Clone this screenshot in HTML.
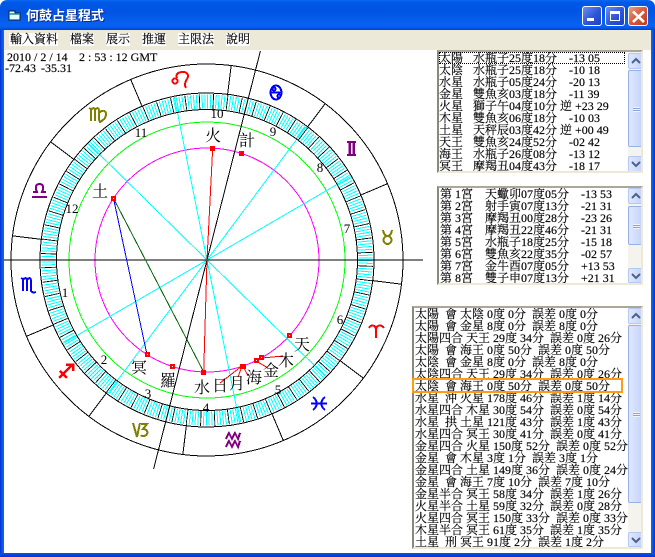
<!DOCTYPE html>
<html><head><meta charset="utf-8"><style>
html,body{margin:0;padding:0;background:#fff}
#w{position:relative;width:655px;height:557px;overflow:hidden;background:#fff;font:12px/12px "Liberation Serif","Noto Serif CJK SC",serif;color:#000;-webkit-text-stroke:.15px #000}
.abs,.tb,.b,.l,.s,.sb,.up,.dn,.th,.g{position:absolute}
#tb{position:absolute;left:0;top:0;width:655px;height:30px;border-radius:7px 7px 0 0;background:linear-gradient(180deg,#0a6af0 0,#0058e6 8%,#0054e3 40%,#0a62f2 85%,#0458ea 93%,#0040c8 100%)}
#ttl{position:absolute;left:26px;top:9px;font:bold 13px/14px "Liberation Sans","Noto Sans CJK TC",sans-serif;color:#fff;-webkit-text-stroke:0;text-shadow:1px 1px 0 #0a2a90;white-space:pre}
#lb{position:absolute;left:0;top:30px;width:4px;height:527px;background:linear-gradient(90deg,#0831d9,#0855dd 50%,#166aee)}
#rb{position:absolute;left:651px;top:30px;width:4px;height:527px;background:linear-gradient(270deg,#0831d9,#0855dd 50%,#166aee)}
#bb{position:absolute;left:0;top:553px;width:655px;height:4px;background:linear-gradient(180deg,#0855dd,#0831d9)}
#mn{position:absolute;left:4px;top:30px;width:647px;height:20px;background:#ece9d8}
.m{position:absolute;top:33px;height:13px;line-height:13px;background:#fff;white-space:pre}
.b{top:6px;width:20px;height:20px;border:1px solid #fff;border-radius:3px;box-sizing:border-box;background:linear-gradient(135deg,#6f8ff0,#2d55d8 55%,#1c3fc4)}
.l{background:#fff;border:2px solid;border-color:#aca899 #ece9d8 #ece9d8 #8a887c;box-sizing:border-box;overflow:hidden}
.r{position:absolute;left:0;height:12px;line-height:12px;white-space:pre}
.r span{position:absolute;top:0;white-space:pre}
.sb{top:0;width:15px;background:#f5f3ee}
.up,.dn,.th{left:0;width:15px;box-sizing:border-box;border:1px solid #b4c8f6;border-radius:2px;background:linear-gradient(90deg,#dfe8fe,#c5d4fc)}
.th{border-color:#98b1e4}
.up svg,.dn svg{position:absolute;left:2px;top:3px}
.g{left:4px;width:7px;height:5px;background:repeating-linear-gradient(180deg,#eef3fe 0,#eef3fe 1px,#8ca4de 1px,#8ca4de 2px)}
svg text{-webkit-text-stroke:0}
</style></head><body><div id="w">

<svg class="abs" style="left:0;top:0" width="655" height="557" viewBox="0 0 655 557" shape-rendering="crispEdges" fill="none">
<circle cx="207" cy="260" r="196" stroke="#000"/>
<circle cx="207" cy="260" r="138" stroke="#00ff00"/>
<circle cx="207" cy="260" r="112" stroke="#ff00ff"/>
<g stroke="#00ffff">
<line x1="207" y1="260" x2="63.4" y2="343.4"/><line x1="207" y1="260" x2="350.6" y2="176.6"/>
<line x1="207" y1="260" x2="108" y2="393.2"/><line x1="207" y1="260" x2="306" y2="126.8"/>
<line x1="207" y1="260" x2="239.6" y2="422.8"/><line x1="207" y1="260" x2="174.4" y2="97.2"/>
<line x1="207" y1="260" x2="325.4" y2="376.3"/><line x1="207" y1="260" x2="88.6" y2="143.7"/>
</g>
<circle cx="207" cy="260" r="158.5" stroke="#00ffff" stroke-width="14" stroke-dasharray="1 1.766"/>
<circle cx="207" cy="260" r="158.5" stroke="#000" stroke-width="15" stroke-dasharray="0.8 13.03" stroke-dashoffset="-5.75"/>
<circle cx="207" cy="260" r="167" stroke="#000"/>
<circle cx="207" cy="260" r="150.5" stroke="#000"/>
<g stroke="#000">
<line x1="42.3" y1="239.5" x2="12.5" y2="235.8"/><line x1="54.1" y1="324.6" x2="26.5" y2="336.3"/>
<line x1="106.9" y1="392.4" x2="88.8" y2="416.4"/><line x1="186.5" y1="424.7" x2="182.8" y2="454.5"/>
<line x1="271.6" y1="412.9" x2="283.3" y2="440.5"/><line x1="339.4" y1="360.1" x2="363.4" y2="378.2"/>
<line x1="371.7" y1="280.5" x2="401.5" y2="284.2"/><line x1="359.9" y1="195.4" x2="387.5" y2="183.7"/>
<line x1="307.1" y1="127.6" x2="325.2" y2="103.6"/><line x1="227.5" y1="95.3" x2="231.2" y2="65.5"/>
<line x1="142.4" y1="107.1" x2="130.7" y2="79.5"/><line x1="74.6" y1="159.9" x2="50.6" y2="141.8"/>
<line x1="4" y1="260" x2="423" y2="260"/>
<line x1="153.6" y1="469" x2="260.4" y2="51"/>
</g>
<line x1="113.5" y1="198.4" x2="147" y2="354.6" stroke="#0000ff"/>
<line x1="113.5" y1="198.4" x2="203.7" y2="372" stroke="#006400"/>
<g stroke="#ff0000">
<line x1="207" y1="260" x2="212.7" y2="148"/><line x1="207" y1="260" x2="203.7" y2="372"/>
<line x1="242" y1="366" x2="220" y2="383"/><line x1="242" y1="366" x2="238" y2="377"/>
<line x1="243" y1="366" x2="248" y2="376"/><line x1="256" y1="361" x2="268" y2="368"/>
<line x1="262" y1="358" x2="283" y2="356"/>
</g>
<g fill="#ff0000">
<rect x="111" y="196" width="5" height="5"/><rect x="210" y="146" width="5" height="5"/>
<rect x="239" y="151" width="5" height="5"/><rect x="170" y="364" width="5" height="5"/>
<rect x="201" y="370" width="5" height="5"/><rect x="145" y="352" width="5" height="5"/>
<rect x="287" y="333" width="5" height="5"/><rect x="259" y="355" width="5" height="5"/>
<rect x="254" y="358" width="5" height="5"/><rect x="240" y="364" width="6" height="5"/>
</g>
<g fill="#fff">
<rect x="113" y="198" width="1" height="1"/><rect x="172" y="366" width="1" height="1"/>
<rect x="147" y="354" width="1" height="1"/><rect x="289" y="335" width="1" height="1"/>
<rect x="261" y="357" width="1" height="1"/><rect x="256" y="360" width="1" height="1"/>
</g>
<g stroke="#ff0000" stroke-width="2">
<circle cx="175" cy="81" r="2.5"/>
<path d="M177 78C175 73 180 72 183 72C188 72 189 76 187 79C185 82 184 85 186 88"/>
<path d="M369 328C371 324 375 325 376 329V338M376 329C377 325 381 324 384 328"/>
<path d="M59 378L72 365M66 364.5H73V371M60 371L67 378" stroke-width="2.5"/>
</g>
<g stroke="#0000ff" stroke-width="2">
<ellipse cx="276" cy="92.5" rx="5.5" ry="7"/><path d="M271 92.5H281"/>
<circle cx="274" cy="89" r="1.5"/><circle cx="279" cy="96" r="1.5"/>
<path d="M313 397C318 401 318 406 313 410M325 397C320 401 320 406 325 410M311 403.5H327"/>
<path d="M21 278L23 279V291M23 280C25 277 27 278 27 281V291M27 280C29 277 31 278 31 281V290C31 292 33 293 36 292"/>
</g>
<g stroke="#800080" stroke-width="2">
<path d="M347 142H356M347 155H356" />
<path d="M349.5 142V155M353.5 142V155" stroke-width="2.5"/>
<path d="M226 439L229 433L232 439L235 433L238 439L240 433M226 447L229 441L232 447L235 441L238 447L240 441"/>
<path d="M33 192H37C34 186 37 184 39.5 184C42 184 45 186 42 192H46M32 197H47"/>
</g>
<g stroke="#808000" stroke-width="2">
<circle cx="387.5" cy="240" r="4"/>
<path d="M383 230C384 235 386 236 387.5 236C389 236 391 235 392 230"/>
<path d="M133 423L137 437L140 423M141 424H147L143 429C147 429 148 432 147 434C146 436 142 437 141 435"/>
<path d="M89 108L91 109V121M91 110C93 107 95 108 95 111V121M95 110C97 107 99 108 99 111V119C99 121 100 122 101 122M99 113C103 109 106 111 106 114C106 118 103 121 99 122"/>
</g>
<g fill="#000" font-family="Liberation Serif,serif" font-size="13" text-anchor="middle">
<text x="141" y="137">11</text><text x="72" y="213">12</text><text x="217" y="118">10</text>
<text x="273" y="136">9</text><text x="320" y="172">8</text><text x="347" y="233">7</text>
<text x="65" y="297">1</text><text x="104" y="364">2</text><text x="148" y="398">3</text>
<text x="206" y="412">4</text><text x="278" y="394">5</text><text x="340" y="324">6</text>
</g>
<g fill="#000" font-family="Liberation Serif,Noto Serif CJK SC,serif" font-size="16" text-anchor="middle">
<text x="213" y="141">火</text><text x="247" y="146">計</text><text x="100" y="197">土</text>
<text x="139" y="373">冥</text><text x="168" y="386">羅</text><text x="202" y="393">水</text>
<text x="220" y="391">日</text><text x="237" y="389">月</text><text x="254" y="383">海</text>
<text x="271" y="376">金</text><text x="286" y="366">木</text><text x="302" y="350">天</text>
</g>
</svg>

<div id="lb"></div><div id="rb"></div><div id="bb"></div>
<div id="tb"></div>
<svg class="abs" style="left:8px;top:10px" width="14" height="12" viewBox="0 0 14 12"><path d="M1 1H7V3H12V10H1Z" fill="#dff" stroke="#102040"/><path d="M1 4H12" stroke="#2a8a9a" stroke-width="1.5"/></svg>
<div id="ttl">何鼓占星程式</div>
<div class="b" style="left:582px"><div class="abs" style="left:4px;top:11px;width:7px;height:3px;background:#fff"></div></div>
<div class="b" style="left:605px"><div class="abs" style="left:4px;top:4px;width:10px;height:10px;box-sizing:border-box;border:1px solid #fff;border-top-width:3px"></div></div>
<div class="b" style="left:628px;background:linear-gradient(135deg,#e8a08a,#d8583a 50%,#c23a1c)"><svg class="abs" style="left:3px;top:3px" width="13" height="13"><path d="M1 1.5L12 12M12 1.5L1 12" stroke="#fff" stroke-width="2.6" fill="none"/></svg></div>

<div id="mn"></div>
<div class="m" style="left:9px;width:49px;padding-left:1px;box-sizing:border-box">輸入資料</div>
<div class="m" style="left:70px">檔案</div>
<div class="m" style="left:106px">展示</div>
<div class="m" style="left:142px">推運</div>
<div class="m" style="left:178px">主限法</div>
<div class="m" style="left:226px">說明</div>

<div class="abs" style="left:7px;top:51px;white-space:pre">2010 / 2 / 14</div>
<div class="abs" style="left:79px;top:51px;white-space:pre">2 : 53 : 12 GMT</div>
<div class="abs" style="left:5px;top:62px;white-space:pre">-72.43</div>
<div class="abs" style="left:41px;top:62px;white-space:pre">-35.31</div>

<!-- List 1 -->
<div class="l" style="left:437px;top:50px;width:206px;height:123px">
<div class="r" style="top:0"><span style="left:0">太陽</span><span style="left:34px">水瓶子25度18分</span><span style="left:130px">-13 05</span></div>
<div class="r" style="top:12px"><span style="left:0">太陰</span><span style="left:34px">水瓶子25度18分</span><span style="left:130px">-10 18</span></div>
<div class="r" style="top:24px"><span style="left:0">水星</span><span style="left:34px">水瓶子05度24分</span><span style="left:130px">-20 13</span></div>
<div class="r" style="top:36px"><span style="left:0">金星</span><span style="left:34px">雙魚亥03度18分</span><span style="left:130px">-11 39</span></div>
<div class="r" style="top:48px"><span style="left:0">火星</span><span style="left:34px">獅子午04度10分</span><span style="left:121px">逆</span><span style="left:136px">+23 29</span></div>
<div class="r" style="top:60px"><span style="left:0">木星</span><span style="left:34px">雙魚亥06度18分</span><span style="left:130px">-10 03</span></div>
<div class="r" style="top:72px"><span style="left:0">土星</span><span style="left:34px">天秤辰03度42分</span><span style="left:121px">逆</span><span style="left:136px">+00 49</span></div>
<div class="r" style="top:84px"><span style="left:0">天王</span><span style="left:34px">雙魚亥24度52分</span><span style="left:130px">-02 42</span></div>
<div class="r" style="top:96px"><span style="left:0">海王</span><span style="left:34px">水瓶子26度08分</span><span style="left:130px">-13 12</span></div>
<div class="r" style="top:108px"><span style="left:0">冥王</span><span style="left:34px">摩羯丑04度43分</span><span style="left:130px">-18 17</span></div>
<div class="abs" style="left:0;top:0;width:186px;height:12px;box-sizing:border-box;border:1px dotted #000"></div>
<div class="sb" style="left:189px;height:119px">
<div class="up" style="top:1px;height:16px"><svg width="10" height="9"><path d="M1 6L5 2L9 6" stroke="#4d6185" stroke-width="2" fill="none"/></svg></div>
<div class="th" style="top:18px;height:77px"><div class="g" style="top:36px"></div></div>
<div class="dn" style="top:104px;height:16px"><svg width="10" height="9"><path d="M1 2L5 6L9 2" stroke="#4d6185" stroke-width="2" fill="none"/></svg></div>
</div></div>

<!-- List 2 -->
<div class="l" style="left:437px;top:186px;width:206px;height:99px">
<div class="r" style="top:0"><span style="left:1px">第 1宮</span><span style="left:46px">天蠍卯07度05分</span><span style="left:142px">-13 53</span></div>
<div class="r" style="top:12px"><span style="left:1px">第 2宮</span><span style="left:46px">射手寅07度13分</span><span style="left:142px">-21 31</span></div>
<div class="r" style="top:24px"><span style="left:1px">第 3宮</span><span style="left:46px">摩羯丑00度28分</span><span style="left:142px">-23 26</span></div>
<div class="r" style="top:36px"><span style="left:1px">第 4宮</span><span style="left:46px">摩羯丑22度46分</span><span style="left:142px">-21 31</span></div>
<div class="r" style="top:48px"><span style="left:1px">第 5宮</span><span style="left:46px">水瓶子18度25分</span><span style="left:142px">-15 18</span></div>
<div class="r" style="top:60px"><span style="left:1px">第 6宮</span><span style="left:46px">雙魚亥22度35分</span><span style="left:142px">-02 57</span></div>
<div class="r" style="top:72px"><span style="left:1px">第 7宮</span><span style="left:46px">金牛酉07度05分</span><span style="left:142px">+13 53</span></div>
<div class="r" style="top:84px"><span style="left:1px">第 8宮</span><span style="left:46px">雙子申07度13分</span><span style="left:142px">+21 31</span></div>
<div class="sb" style="left:189px;height:95px">
<div class="up" style="top:0;height:16px"><svg width="10" height="9"><path d="M1 6L5 2L9 6" stroke="#4d6185" stroke-width="2" fill="none"/></svg></div>
<div class="th" style="top:18px;height:39px"><div class="g" style="top:17px"></div></div>
<div class="dn" style="top:80px;height:15px"><svg width="10" height="9"><path d="M1 2L5 6L9 2" stroke="#4d6185" stroke-width="2" fill="none"/></svg></div>
</div></div>

<!-- List 3 -->
<div class="l" style="left:412px;top:306px;width:231px;height:243px">
<div class="r" style="left:1px;top:0">太陽  會 太陰 0度 0分  誤差 0度 0分</div>
<div class="r" style="left:1px;top:12px">太陽  會 金星 8度 0分  誤差 8度 0分</div>
<div class="r" style="left:1px;top:24px">太陽四合 天王 29度 34分  誤差 0度 26分</div>
<div class="r" style="left:1px;top:36px">太陽  會 海王 0度 50分  誤差 0度 50分</div>
<div class="r" style="left:1px;top:48px">太陰  會 金星 8度 0分  誤差 8度 0分</div>
<div class="r" style="left:1px;top:60px">太陰四合 天王 29度 34分  誤差 0度 26分</div>
<div class="r" style="left:1px;top:72px">太陰  會 海王 0度 50分  誤差 0度 50分</div>
<div class="r" style="left:1px;top:84px">水星  沖 火星 178度 46分  誤差 1度 14分</div>
<div class="r" style="left:1px;top:96px">水星四合 木星 30度 54分  誤差 0度 54分</div>
<div class="r" style="left:1px;top:108px">水星  拱 土星 121度 43分  誤差 1度 43分</div>
<div class="r" style="left:1px;top:120px">水星四合 冥王 30度 41分  誤差 0度 41分</div>
<div class="r" style="left:1px;top:132px">金星四合 火星 150度 52分  誤差 0度 52分</div>
<div class="r" style="left:1px;top:144px">金星  會 木星 3度 1分  誤差 3度 1分</div>
<div class="r" style="left:1px;top:156px">金星四合 土星 149度 36分  誤差 0度 24分</div>
<div class="r" style="left:1px;top:168px">金星  會 海王 7度 10分  誤差 7度 10分</div>
<div class="r" style="left:1px;top:180px">金星半合 冥王 58度 34分  誤差 1度 26分</div>
<div class="r" style="left:1px;top:192px">火星半合 土星 59度 32分  誤差 0度 28分</div>
<div class="r" style="left:1px;top:204px">火星四合 冥王 150度 33分  誤差 0度 33分</div>
<div class="r" style="left:1px;top:216px">木星半合 冥王 61度 35分  誤差 1度 35分</div>
<div class="r" style="left:1px;top:228px">土星  刑 冥王 91度 2分  誤差 1度 2分</div>
<div class="sb" style="left:214px;height:239px">
<div class="up" style="top:0;height:16px"><svg width="10" height="9"><path d="M1 6L5 2L9 6" stroke="#4d6185" stroke-width="2" fill="none"/></svg></div>
<div class="th" style="top:17px;height:178px"><div class="g" style="top:86px"></div></div>
<div class="dn" style="top:224px;height:15px"><svg width="10" height="9"><path d="M1 2L5 6L9 2" stroke="#4d6185" stroke-width="2" fill="none"/></svg></div>
</div></div>
<div class="abs" style="left:412px;top:378px;width:211px;height:15px;box-sizing:border-box;border:2px solid #ff9c12"></div>

</div></body></html>
